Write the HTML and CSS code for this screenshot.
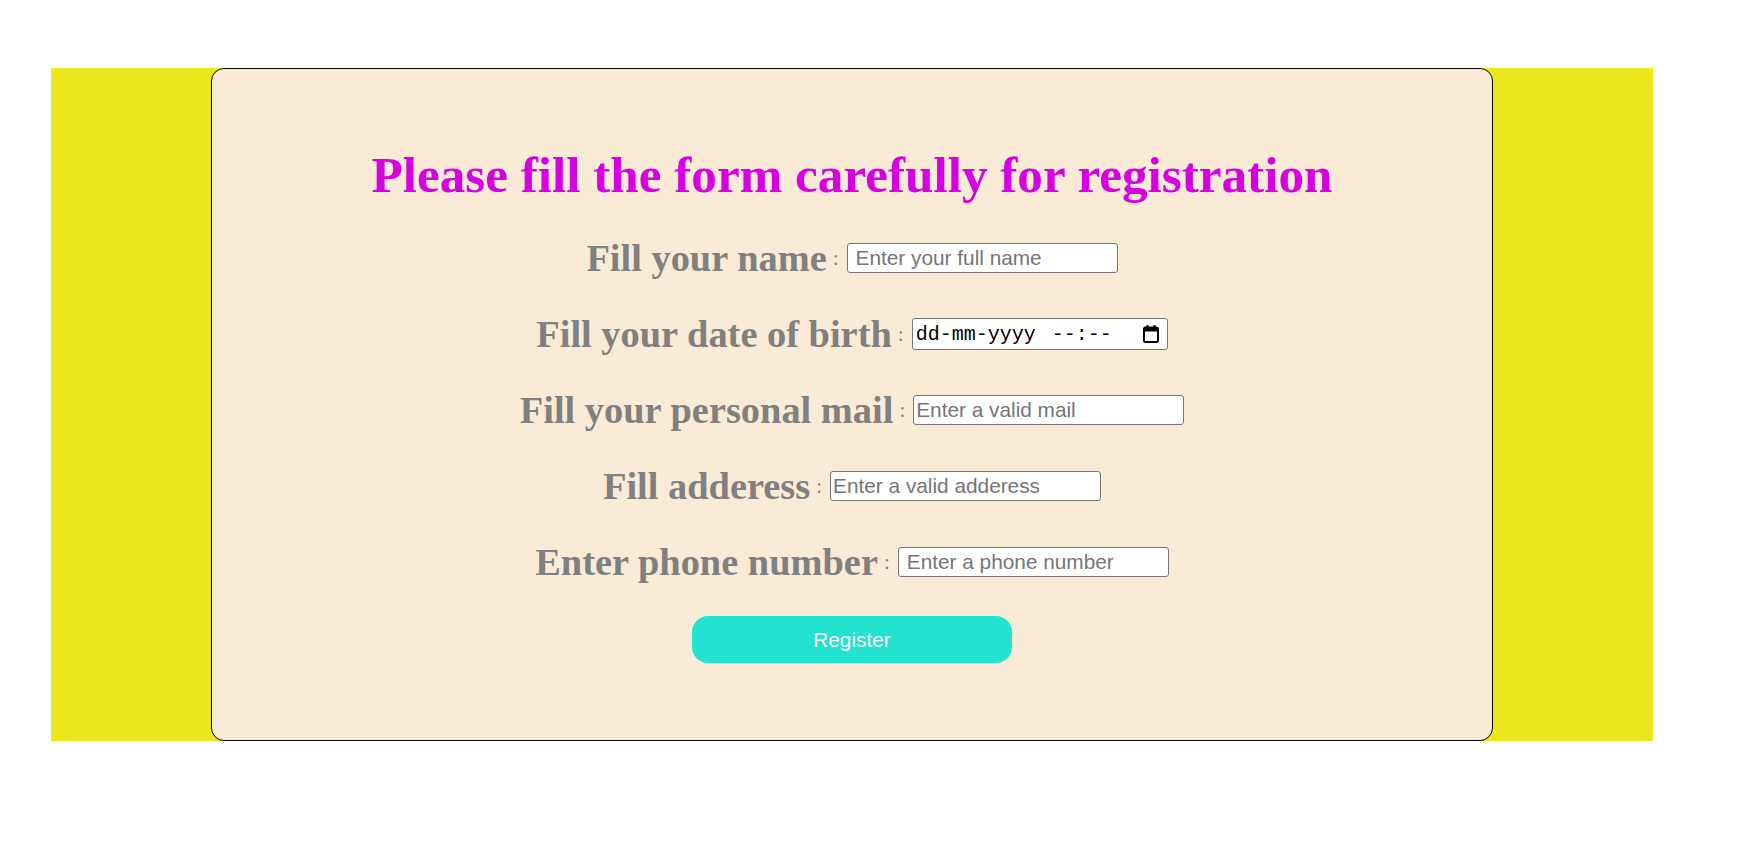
FILE: index.html
```html
<!DOCTYPE html>
<html lang="en">
<head>
<meta charset="utf-8">
<title>Registration</title>
<link rel="stylesheet" href="styles.css">
</head>
<body>
<div class="band">
  <form class="card">
    <h1 class="title">Please fill the form carefully for registration</h1>
    <div class="row">
      <label class="label" for="name">Fill your name</label>
      <span class="colon">:</span>
      <input class="field padded" id="name" type="text" placeholder="Enter your full name">
    </div>
    <div class="row">
      <label class="label" for="dob">Fill your date of birth</label>
      <span class="colon">:</span>
      <div class="date-field" id="dob">
        <span class="date-text">dd-mm-yyyy</span>
        <span class="date-text time">--:--</span>
        <svg class="cal" width="16" height="18" viewBox="0 0 16 18" aria-hidden="true">
          <rect x="1" y="2.5" width="14" height="14.5" rx="1.5" fill="none" stroke="#000" stroke-width="2"/>
          <rect x="1" y="2.5" width="14" height="4" fill="#000"/>
          <rect x="3.5" y="0" width="2" height="3" fill="#000"/>
          <rect x="10.5" y="0" width="2" height="3" fill="#000"/>
        </svg>
      </div>
    </div>
    <div class="row">
      <label class="label" for="mail">Fill your personal mail</label>
      <span class="colon">:</span>
      <input class="field" id="mail" type="email" placeholder="Enter a valid mail">
    </div>
    <div class="row">
      <label class="label" for="addr">Fill adderess</label>
      <span class="colon">:</span>
      <input class="field" id="addr" type="text" placeholder="Enter a valid adderess">
    </div>
    <div class="row">
      <label class="label" for="phone">Enter phone number</label>
      <span class="colon">:</span>
      <input class="field padded" id="phone" type="tel" placeholder="Enter a phone number">
    </div>
    <button class="register" type="button">Register</button>
  </form>
</div>
</body>
</html>
```

FILE: styles.css
```css
html, body {
  margin: 0;
  padding: 0;
  background: #ffffff;
}

body {
  font-family: "Liberation Serif", "Times New Roman", serif;
}

.band {
  margin: 68px 91px 0 51px;
  height: 673px;
  background: #ece71a;
  display: flex;
  justify-content: center;
}

.card {
  box-sizing: border-box;
  width: 1282px;
  height: 673px;
  background: #faebd7;
  border: 1px solid #000;
  border-radius: 13px;
  padding-top: 77px;
  display: flex;
  flex-direction: column;
  align-items: center;
  gap: 32px;
}

.title {
  margin: 0;
  font-family: "Liberation Serif", "Times New Roman", serif;
  font-weight: bold;
  font-size: 51.2px;
  line-height: 58px;
  color: #d600e0;
  text-align: center;
}

.row {
  height: 44px;
  display: flex;
  align-items: center;
  justify-content: center;
}

.label {
  font-family: "Liberation Serif", "Times New Roman", serif;
  font-weight: bold;
  font-size: 38.4px;
  line-height: 44px;
  color: #808080;
}

.colon {
  font-family: "Liberation Serif", "Times New Roman", serif;
  font-size: 21px;
  color: #808080;
  margin: 0 8px 0 6px;
}

.field {
  box-sizing: border-box;
  width: 271px;
  height: 30px;
  margin: 0;
  padding: 0 2px;
  border: 1px solid #767676;
  border-radius: 3px;
  background: #fff;
  font-family: "Liberation Sans", Arial, sans-serif;
  font-size: 20.8px;
  color: #000;
}

.field::placeholder {
  color: #757575;
}

.field.padded {
  padding-left: 8px;
}

.date-field {
  box-sizing: border-box;
  width: 256px;
  height: 32px;
  border: 1px solid #767676;
  border-radius: 3px;
  background: #fff;
  display: flex;
  align-items: center;
  padding: 0 8px 0 3px;
}

.date-text {
  font-family: "Liberation Mono", "DejaVu Sans Mono", monospace;
  font-size: 20px;
  color: #000;
}

.date-text.time {
  margin-left: 16px;
}

.cal {
  margin-left: auto;
}

.register {
  width: 320px;
  height: 47px;
  margin: 0;
  border: none;
  border-radius: 16px;
  background: #22e2d0;
  color: #fff;
  font-family: "Liberation Sans", Arial, sans-serif;
  font-size: 20.8px;
  cursor: pointer;
}
```
